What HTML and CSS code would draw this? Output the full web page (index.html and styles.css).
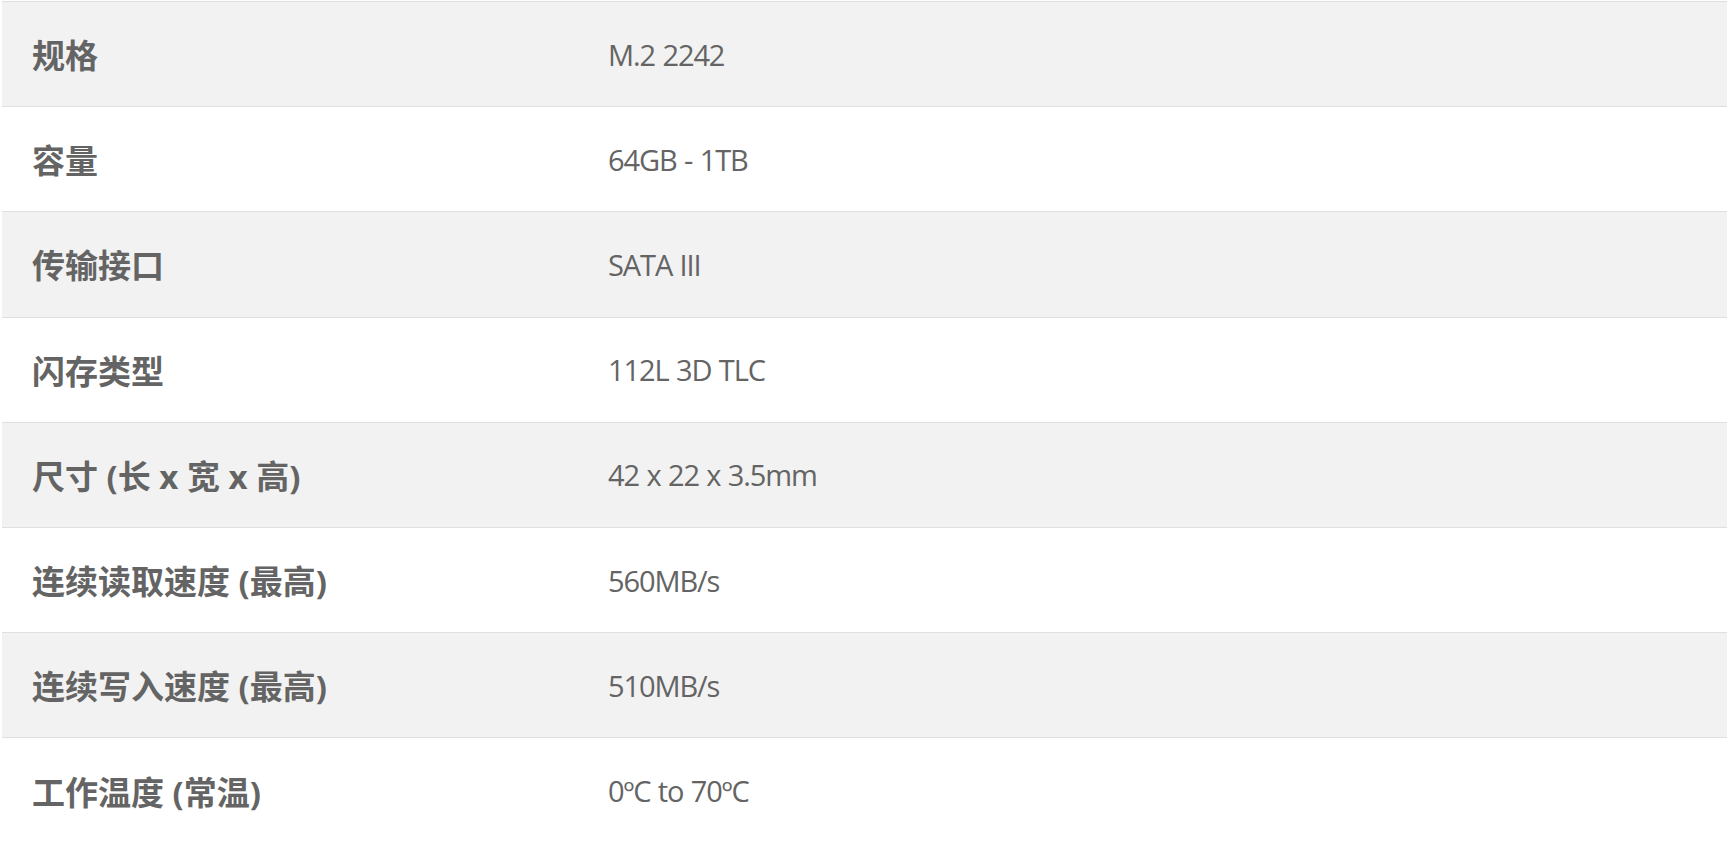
FILE: index.html
```html
<!DOCTYPE html>
<html lang="zh-CN">
<head>
<meta charset="utf-8">
<title>规格</title>
<link rel="stylesheet" href="styles.css">
</head>
<body>
<div class="wrap">
  <table class="spec">
    <tbody>
      <tr><th>规格</th><td>M.2 2242</td></tr>
      <tr><th>容量</th><td>64GB - 1TB</td></tr>
      <tr><th>传输接口</th><td>SATA III</td></tr>
      <tr><th>闪存类型</th><td>112L 3D TLC</td></tr>
      <tr><th>尺寸 (长 x 宽 x 高)</th><td>42 x 22 x 3.5mm</td></tr>
      <tr><th>连续读取速度 (最高)</th><td>560MB/s</td></tr>
      <tr><th>连续写入速度 (最高)</th><td>510MB/s</td></tr>
      <tr><th>工作温度 (常温)</th><td>0ºC to 70ºC</td></tr>
    </tbody>
  </table>
</div>
</body>
</html>
```

FILE: styles.css
```css
html, body {
  margin: 0;
  padding: 0;
  background: #ffffff;
}
.wrap {
  padding: 1px 2px 0 2px;
}
.spec {
  width: 100%;
  border-collapse: collapse;
  border-top: 1px solid #dedfe1;
  font-family: "Open Sans", "Noto Sans CJK SC", sans-serif;
  color: #646464;
}
.spec tr {
  height: 105.2px;
  border-bottom: 1px solid #dedfe1;
}
.spec tr:nth-child(odd) {
  background: #f2f2f2;
}
.spec tr:last-child {
  border-bottom: none;
}
.spec th,
.spec td {
  padding: 0 0 0 30px;
  text-align: left;
  vertical-align: middle;
}
.spec th {
  width: 546px;
  font-family: "Open Sans", "Noto Sans CJK SC", sans-serif;
  font-weight: 700;
  font-size: 33px;
  word-spacing: 0;
  color: #646464;
}
.spec td {
  font-size: 29px;
  letter-spacing: -1.1px;
  word-spacing: 1px;
  font-weight: 400;
}
```
